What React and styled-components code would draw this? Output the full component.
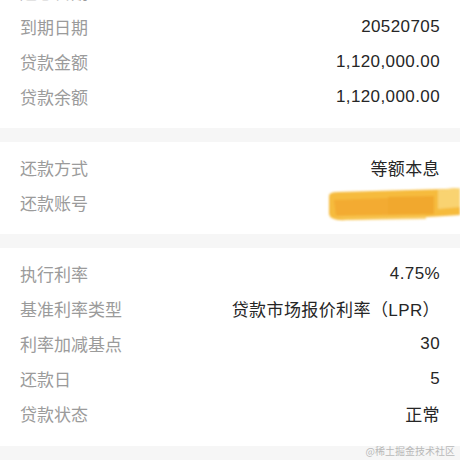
import styled, { createGlobalStyle } from "styled-components";

const Global = createGlobalStyle`
    html, body {
        margin: 0;
        padding: 0;
        background: #f6f6f6;
    }
    body {
        font-family: "Helvetica Neue", "Liberation Sans", "Noto Sans CJK SC", sans-serif;
        -webkit-font-smoothing: antialiased;
    }
`;

const Page = styled.div`
    position: relative;
    width: 460px;
    height: 460px;
    overflow: hidden;
    background: #f6f6f6;
`;

const Scroll = styled.div`
    display: flex;
    flex-direction: column;
    gap: 14px;
    margin-top: -35px;
`;

const Section = styled.div`
    background: #fff;
    padding: ${props => props.top || 8}px 0 ${props => props.bottom || 14}px;
`;

const Row = styled.div`
    display: flex;
    justify-content: space-between;
    align-items: center;
    height: 35px;
    padding: 0 20px;
    font-size: 17px;
`;

const Label = styled.div`
    color: #9b9b9b;
`;

const Value = styled.div`
    color: #262626;
    letter-spacing: 0.4px;
`;

const Smudge = styled.svg`
    display: block;
    margin-right: -20px;
    margin-top: 2px;
`;

const Watermark = styled.div`
    position: absolute;
    right: 5px;
    bottom: 2px;
    font-size: 10px;
    color: #b9b9b9;
    font-family: "Noto Sans CJK SC", sans-serif;
`;

const Masked = () => (
    <Smudge width="134" height="36" viewBox="0 0 134 36">
        <defs>
            <filter id="soft" x="-10%" y="-30%" width="120%" height="160%">
                <feGaussianBlur stdDeviation="1.3" />
            </filter>
        </defs>
        <g filter="url(#soft)">
            <path d="M3 11 Q2 6 12 6 L120 3 Q134 1 134 4 L134 29 Q120 30 100 31 L20 34 Q4 35 3 28 Z" fill="#f6bb3c" />
            <path d="M8 14 L62 12 L62 29 L10 30 Z" fill="#f1a52e" opacity="0.75" />
            <path d="M62 11 L108 10 L108 28 L62 29 Z" fill="#ef9f28" opacity="0.7" />
            <path d="M112 4 L134 2 L134 21 L112 23 Z" fill="#f9d77a" opacity="0.85" />
            <path d="M6 30 L100 29 L100 33 L20 34 Z" fill="#f8c553" opacity="0.8" />
        </g>
    </Smudge>
);

const groups = [
    [
        ["起息日期", "20220705"],
        ["到期日期", "20520705"],
        ["贷款金额", "1,120,000.00"],
        ["贷款余额", "1,120,000.00"],
    ],
    [
        ["还款方式", "等额本息"],
        ["还款账号", null],
    ],
    [
        ["执行利率", "4.75%"],
        ["基准利率类型", "贷款市场报价利率（LPR）"],
        ["利率加减基点", "30"],
        ["还款日", "5"],
        ["贷款状态", "正常"],
    ],
];

export default function App() {
    return (
        <Page>
            <Global />
            <Scroll>
                {groups.map((rows, i) => (
                    <Section key={i} top={i === 0 ? 9 : 8} bottom={i === 2 ? 15 : 14}>
                        {rows.map(([label, value]) => (
                            <Row key={label}>
                                <Label>{label}</Label>
                                {value === null ? <Masked /> : <Value>{value}</Value>}
                            </Row>
                        ))}
                    </Section>
                ))}
            </Scroll>
            <Watermark>@稀土掘金技术社区</Watermark>
        </Page>
    );
}
